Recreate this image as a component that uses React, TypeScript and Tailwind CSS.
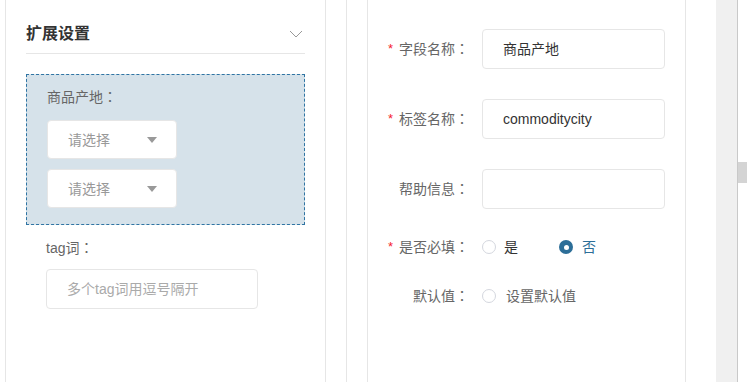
import React from "react";

const font = { fontFamily: '"Liberation Sans", "Noto Sans CJK SC", sans-serif' };

function Colon() {
  return <span className="font-['Noto_Sans_CJK_JP',sans-serif] leading-none">：</span>;
}

function Select() {
  return (
    <div className="w-[130px] h-[39px] bg-white rounded-[4px] border border-[#e6e6e6] flex items-center pl-[20px] pr-[19px] justify-between">
      <span className="text-[14px] leading-[20px] text-[#999]">请选择</span>
      <span className="w-0 h-0 border-l-[5px] border-r-[5px] border-t-[6px] border-l-transparent border-r-transparent border-t-[#999]" />
    </div>
  );
}

function Label({ text, star }: { text: string; star?: boolean }) {
  return (
    <div className="w-[101px] h-[20px] flex justify-end items-center text-[14px] leading-[20px] text-[#666] shrink-0">
      {star && <span className="text-[#f5222d] mr-[6px] text-[13px]">*</span>}
      <span className="h-[20px]">
        {text}
        <Colon />
      </span>
    </div>
  );
}

function Radio({ checked }: { checked?: boolean }) {
  return checked ? (
    <span className="w-[14px] h-[14px] rounded-full bg-[#2c6e98] flex items-center justify-center shrink-0">
      <span className="w-[5px] h-[5px] rounded-full bg-white" />
    </span>
  ) : (
    <span className="w-[14px] h-[14px] rounded-full border border-[#d4d7de] bg-white shrink-0" />
  );
}

export default function App() {
  return (
    <div className="w-[747px] h-[382px] bg-white flex overflow-hidden" style={font}>
      <div className="w-[5px] shrink-0" />
      {/* left panel */}
      <div className="w-[321px] h-full border-l border-r border-[#e6e6e6] px-[20px] shrink-0">
        <div className="mt-[14px] h-[40px] border-b border-[#e6e6e6] flex items-center justify-between">
          <span className="text-[16px] leading-[24px] font-bold text-[#333]">扩展设置</span>
          <svg width="14" height="8" viewBox="0 0 14 8" className="mr-[2px]">
            <path d="M1 1 L7 7 L13 1" fill="none" stroke="#999" strokeWidth="1" />
          </svg>
        </div>
        <div className="mt-[20px] h-[151px] border border-dashed border-[#2f74a3] bg-[#d6e2ea] pl-[20px] pt-[12px]">
          <div className="h-[20px] text-[14px] leading-[20px] text-[#666]">
            商品产地
            <Colon />
          </div>
          <div className="mt-[13px] flex flex-col gap-[10px]">
            <Select />
            <Select />
          </div>
        </div>
        <div className="pl-[20px]">
          <div className="mt-[13px] h-[20px] text-[14px] leading-[20px] text-[#666]">
            tag词
            <Colon />
          </div>
          <div className="mt-[11px] w-[212px] h-[40px] rounded-[4px] border border-[#e6e6e6] flex items-center pl-[20px]">
            <span className="text-[14px] text-[#aaa]">多个tag词用逗号隔开</span>
          </div>
        </div>
      </div>
      <div className="w-[20px] shrink-0" />
      {/* right panel */}
      <div className="border-l border-[#e6e6e6] pl-[20px] shrink-0 h-full">
        <div className="w-[319px] h-full border-l border-r border-[#e6e6e6] pt-[29px] flex flex-col">
          <div className="flex items-center h-[40px]">
            <Label text="字段名称" star />
            <div className="ml-[13px] w-[183px] h-[40px] rounded-[4px] border border-[#e6e6e6] flex items-center pl-[20px] text-[14px] text-[#333]">商品产地</div>
          </div>
          <div className="flex items-center h-[40px] mt-[30px]">
            <Label text="标签名称" star />
            <div className="ml-[13px] w-[183px] h-[40px] rounded-[4px] border border-[#e6e6e6] flex items-center pl-[20px] text-[14px] text-[#333]">commoditycity</div>
          </div>
          <div className="flex items-center h-[40px] mt-[30px]">
            <Label text="帮助信息" />
            <div className="ml-[13px] w-[183px] h-[40px] rounded-[4px] border border-[#e6e6e6]" />
          </div>
          <div className="flex items-center h-[20px] mt-[28px]">
            <Label text="是否必填" star />
            <div className="ml-[13px] flex items-center">
              <Radio />
              <span className="ml-[8px] text-[14px] leading-[20px] text-[#333]">是</span>
              <span className="ml-[41px]" />
              <Radio checked />
              <span className="ml-[9px] text-[14px] leading-[20px] text-[#2c6e98]">否</span>
            </div>
          </div>
          <div className="flex items-center h-[20px] mt-[29px]">
            <Label text="默认值" />
            <div className="ml-[13px] flex items-center">
              <Radio />
              <span className="ml-[10px] text-[14px] leading-[20px] text-[#666]">设置默认值</span>
            </div>
          </div>
        </div>
      </div>
      <div className="w-[30px] shrink-0" />
      {/* scrollbar area */}
      <div className="w-[21px] h-full bg-[#f0f0f0] shrink-0" />
      <div className="w-[1px] h-full bg-[#c9c9c9] shrink-0" />
      <div className="flex-1 h-full pt-[162px]">
        <div className="h-[21px] bg-[#d4d4d4]" />
      </div>
    </div>
  );
}
